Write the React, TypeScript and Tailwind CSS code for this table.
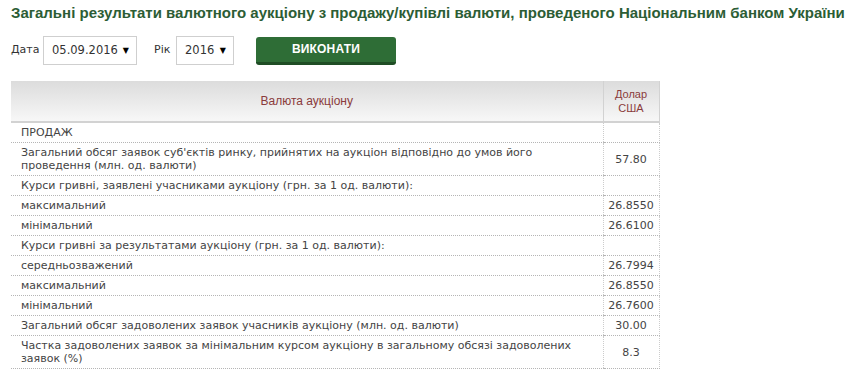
import React from "react";

const rows: { label: string; value: string }[] = [
  { label: "ПРОДАЖ", value: "" },
  {
    label:
      "Загальний обсяг заявок суб'єктів ринку, прийнятих на аукціон відповідно до умов його проведення (млн. од. валюти)",
    value: "57.80",
  },
  { label: "Курси гривні, заявлені учасниками аукціону (грн. за 1 од. валюти):", value: "" },
  { label: "максимальний", value: "26.8550" },
  { label: "мінімальний", value: "26.6100" },
  { label: "Курси гривні за результатами аукціону (грн. за 1 од. валюти):", value: "" },
  { label: "середньозважений", value: "26.7994" },
  { label: "максимальний", value: "26.8550" },
  { label: "мінімальний", value: "26.7600" },
  { label: "Загальний обсяг задоволених заявок учасників аукціону (млн. од. валюти)", value: "30.00" },
  {
    label:
      "Частка задоволених заявок за мінімальним курсом аукціону в загальному обсязі задоволених заявок (%)",
    value: "8.3",
  },
];

const Select: React.FC<{ value: string; width: string }> = ({ value, width }) => (
  <div
    className={`${width} h-[29px] border border-[#cfcfcf] bg-white flex items-center justify-between pl-[8px] pr-[7px] text-[11.5px] text-[#333]`}
  >
    <span>{value}</span>
    <span className="text-[8px] text-black">▼</span>
  </div>
);

export default function App() {
  return (
    <div
      className="w-[849px] h-[377px] overflow-hidden bg-white pl-[11px]"
      style={{ fontFamily: "'DejaVu Sans', Verdana, sans-serif" }}
    >
      <h1 className="pt-[4px] text-[15px] leading-[18px] font-bold text-[#2c5d35] font-['Liberation_Sans',Arial,sans-serif] whitespace-nowrap">
        Загальні результати валютного аукціону з продажу/купівлі валюти, проведеного Національним банком України
      </h1>

      <div className="mt-[14px] flex items-center text-[11px] text-[#333]">
        <span className="w-[32px]">Дата</span>
        <Select value="05.09.2016" width="w-[94px]" />
        <span className="ml-[17px] w-[22px]">Рік</span>
        <Select value="2016" width="w-[58px]" />
        <button className="ml-[22px] w-[140px] h-[28px] rounded-[3px] bg-[#2e6d36] border-b-[3px] border-[#1f4d25] text-white text-[12px] font-bold font-['Liberation_Sans',Arial,sans-serif] tracking-[0.2px]">
          ВИКОНАТИ
        </button>
      </div>

      <table className="mt-[16px] border-collapse text-[11px] leading-[13px] text-[#444]">
        <thead>
          <tr className="bg-gradient-to-b from-[#dcdcdc] to-[#f8f8f8]">
            <th className="w-[592px] h-[41px] border-b-2 border-[#d2d2d2] font-normal text-[#8a3b3b] text-[12px] font-['Liberation_Sans',Arial,sans-serif] text-center align-middle">
              Валюта аукціону
            </th>
            <th className="w-[56px] border-b-2 border-l border-r border-[#d2d2d2] font-normal text-[#8a3b3b] text-[11px] leading-[14px] font-['Liberation_Sans',Arial,sans-serif] text-center align-middle">
              Долар
              <br />
              США
            </th>
          </tr>
        </thead>
        <tbody>
          {rows.map((row, i) => (
            <tr key={i}>
              <td className="pl-[10px] pr-[20px] py-[3px] border-b border-dotted border-[#b5b5b5] text-left">
                {row.label}
              </td>
              <td className="py-[3px] border-b border-dotted border-b-[#b5b5b5] border-l border-l-[#cccccc] border-r border-r-[#cccccc] text-center">
                {row.value}
              </td>
            </tr>
          ))}
        </tbody>
      </table>
    </div>
  );
}
